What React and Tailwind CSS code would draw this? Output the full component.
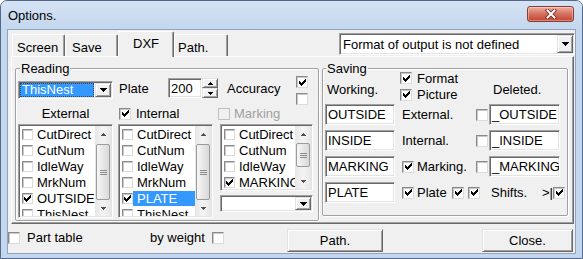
import React from "react";

const sunken =
  "border border-t-[#a0a0a0] border-l-[#a0a0a0] border-b-white border-r-white p-[1px] shadow-[inset_1px_1px_0_#696969,inset_-1px_-1px_0_#e3e3e3]";
const raised =
  "bg-[#f0f0f0] border border-t-[#e3e3e3] border-l-[#e3e3e3] border-b-[#696969] border-r-[#696969] shadow-[inset_1px_1px_0_#ffffff,inset_-1px_-1px_0_#a0a0a0]";

const Check = () => (
  <svg width="7" height="7" viewBox="0 0 7 7" shapeRendering="crispEdges">
    {[2, 3, 4, 3, 2, 1, 0].map((y, x) => (
      <rect key={x} x={x} y={y} width="1" height="3" fill="#000" />
    ))}
  </svg>
);

function Box({ on, disabled, small, className = "" }) {
  const size = small ? "w-[11px] h-[11px]" : "w-[12px] h-[12px]";
  const look = disabled
    ? "bg-[#f0f0f0] border-[#c0c0c0]"
    : "bg-white border-t-[#8a8a8a] border-l-[#8a8a8a] border-r-[#dcdcdc] border-b-[#dcdcdc] shadow-[inset_1px_1px_0_#c8c8c8]";
  return (
    <span className={`flex items-center justify-center shrink-0 border ${size} ${look} ${className}`}>
      {on && <Check />}
    </span>
  );
}

const Tri = ({ up, small, color = "#000" }) =>
  small ? (
    <svg width="5" height="3" viewBox="0 0 5 3" shapeRendering="crispEdges">
      <path d={up ? "M0 3 L2.5 0 L5 3Z" : "M0 0 L5 0 L2.5 3Z"} fill={color} />
    </svg>
  ) : (
    <svg width="7" height="4" viewBox="0 0 7 4" shapeRendering="crispEdges">
      <path d={up ? "M0 4 L3.5 0 L7 4Z" : "M0 0 L7 0 L3.5 4Z"} fill={color} />
    </svg>
  );

function DropBtn() {
  return (
    <div className={`${raised} w-[16px] shrink-0 flex items-center justify-center`}>
      <Tri />
    </div>
  );
}

function ScrollBar({ thumb }) {
  return (
    <div className="w-[16px] shrink-0 flex flex-col bg-gradient-to-r from-[#e6e6e6] via-[#f4f4f4] to-[#e6e6e6]">
      <div className="h-[16px] shrink-0 flex items-center justify-center">
        <Tri up small color="#505050" />
      </div>
      <div className="flex-1">
        <div
          className={`mx-[1px] rounded-[2px] border border-[#9b9b9b] bg-gradient-to-r from-[#f6f6f6] to-[#d9d9d9] flex flex-col items-center justify-center gap-[1px] ${thumb}`}
        >
          <span className="w-[7px] h-[1px] bg-[#8c8c8c]" />
          <span className="w-[7px] h-[1px] bg-[#8c8c8c]" />
          <span className="w-[7px] h-[1px] bg-[#8c8c8c]" />
        </div>
      </div>
      <div className="h-[16px] shrink-0 flex items-center justify-center">
        <Tri small color="#505050" />
      </div>
    </div>
  );
}

function ListBox({ items, thumb, className }) {
  return (
    <div className={`${sunken} bg-white flex ${className}`}>
      <div className="flex-1 min-w-0 overflow-hidden">
        {items.map((it) => (
          <div key={it.t} className="h-[16px] flex items-center pl-[2px] whitespace-nowrap">
            <Box on={it.on} small />
            <span
              className={`flex-1 h-[15px] pl-[4px] leading-[15px] ${it.sel ? "bg-[#3399ff] text-white" : ""}`}
            >
              {it.t}
            </span>
          </div>
        ))}
      </div>
      <ScrollBar thumb={thumb} />
    </div>
  );
}

function Edit({ text, className }) {
  return (
    <div className={`${sunken} bg-white pl-[2px] flex items-center whitespace-nowrap overflow-hidden shrink-0 ${className}`}>
      {text}
    </div>
  );
}

const base = ["CutDirect", "CutNum", "IdleWay", "MrkNum"];
const list1 = [...base.map((t) => ({ t })), { t: "OUTSIDE", on: true }, { t: "ThisNest" }];
const list2 = [...base.map((t) => ({ t })), { t: "PLATE", on: true, sel: true }, { t: "ThisNest" }];
const list3 = [{ t: "CutDirect" }, { t: "CutNum" }, { t: "IdleWay" }, { t: "MARKING", on: true }];

function Reading() {
  return (
    <div className="relative ml-[3px] mt-[11px] w-[304px] h-[153px] shrink-0 border border-[#a0a0a0] rounded-[2px] shadow-[inset_1px_1px_0_#ffffff,1px_1px_0_#ffffff]">
      <span className="absolute -top-[8px] left-[4px] px-[1px] bg-[#f0f0f0]">Reading</span>

      <div className="mt-[6px] h-[30px] flex items-start">
        <div className={`ml-[2px] mt-[6px] w-[95px] h-[18px] ${sunken} bg-white flex`}>
          <div className="flex-1 mr-[1px] bg-[#3399ff] text-white border border-dotted border-[#2b4a6f] pl-[1px] flex items-center leading-[12px]">
            ThisNest
          </div>
          <DropBtn />
        </div>
        <span className="ml-[6px] mt-[6px] w-[49px]">Plate</span>
        <Edit text="200" className="mt-[3px] w-[34px] h-[20px]" />
        <div className="mt-[3px] w-[16px] h-[20px] flex flex-col">
          <div className={`${raised} h-[10px] flex items-center justify-center`}>
            <Tri up small />
          </div>
          <div className={`${raised} h-[10px] flex items-center justify-center`}>
            <Tri small />
          </div>
        </div>
        <span className="ml-[9px] mt-[6px] w-[69px]">Accuracy</span>
        <div className="mt-[1px] flex flex-col gap-[5px]">
          <Box on />
          <Box />
        </div>
      </div>

      <div className="mt-[1px] h-[15px] flex items-center">
        <span className="ml-[2px] w-[95px] text-center">External</span>
        <Box on className="ml-[6px]" />
        <span className="ml-[5px] w-[82px]">Internal</span>
        <Box disabled />
        <span className="ml-[4px] text-[#a0a0a0]">Marking</span>
      </div>

      <div className="mt-[3px] flex items-start">
        <ListBox items={list1} thumb="mt-[2px] h-[56px]" className="ml-[2px] w-[95px] h-[94px]" />
        <ListBox items={list2} thumb="mt-[2px] h-[56px]" className="ml-[5px] w-[95px] h-[94px]" />
        <div className="ml-[7px] w-[93px] flex flex-col">
          <ListBox items={list3} thumb="mt-[1px] h-[24px]" className="w-[93px] h-[67px]" />
          <div className={`mt-[4px] h-[17px] ${sunken} bg-white flex`}>
            <div className="flex-1" />
            <DropBtn />
          </div>
        </div>
      </div>
    </div>
  );
}

function EditRow({ left, right, children, className = "" }) {
  return (
    <div className={`h-[21px] flex items-center ${className}`}>
      <Edit text={left} className="ml-[2px] w-[70px] h-[21px]" />
      {children}
      {right && <Edit text={right} className="w-[71px] h-[21px]" />}
    </div>
  );
}

function Saving() {
  return (
    <div className="relative ml-[3px] mt-[11px] w-[246px] h-[148px] shrink-0 border border-[#a0a0a0] rounded-[2px] shadow-[inset_1px_1px_0_#ffffff,1px_1px_0_#ffffff]">
      <span className="absolute -top-[8px] left-[3px] px-[1px] bg-[#f0f0f0]">Saving</span>

      <div className="h-[35px] flex items-start">
        <span className="ml-[4px] mt-[13px] w-[73px]">Working.</span>
        <div className="mt-[1px] w-[93px] flex flex-col">
          <div className="h-[16px] flex items-center">
            <Box on />
            <span className="ml-[5px]">Format</span>
          </div>
          <div className="h-[17px] flex items-center">
            <Box on />
            <span className="ml-[5px]">Picture</span>
          </div>
        </div>
        <span className="mt-[13px]">Deleted.</span>
      </div>

      <EditRow left="OUTSIDE" right="_OUTSIDE">
        <div className="w-[94px] flex items-center">
          <span className="ml-[7px]">External.</span>
          <Box className="ml-auto mr-[1px]" />
        </div>
      </EditRow>
      <EditRow left="INSIDE" right="_INSIDE" className="mt-[5px]">
        <div className="w-[94px] flex items-center">
          <span className="ml-[7px]">Internal.</span>
          <Box className="ml-auto mr-[1px]" />
        </div>
      </EditRow>
      <EditRow left="MARKING" right="_MARKING" className="mt-[5px]">
        <div className="w-[94px] flex items-center">
          <Box on className="ml-[7px]" />
          <span className="ml-[3px]">Marking.</span>
          <Box className="ml-auto mr-[1px]" />
        </div>
      </EditRow>
      <EditRow left="PLATE" className="mt-[5px]">
        <Box on className="ml-[7px]" />
        <span className="ml-[3px] w-[33px]">Plate</span>
        <Box on className="ml-[2px]" />
        <Box on className="ml-[4px]" />
        <span className="ml-[11px] w-[51px]">Shifts.</span>
        <span className="w-[11px]">&gt;|</span>
        <Box on />
      </EditRow>
    </div>
  );
}

function Tab({ label, className }) {
  return (
    <div
      className={`shrink-0 rounded-t-[2px] border-t border-l border-r border-t-white border-l-white border-r-[#696969] shadow-[inset_-1px_0_0_#a0a0a0] bg-[#f0f0f0] ${className}`}
    >
      {label}
    </div>
  );
}

export default function App() {
  return (
    <div className="w-[583px] h-[259px] flex flex-col bg-[#c4d7ee] border border-[#52698a] rounded-t-[7px] overflow-hidden font-['Liberation_Sans',Arial,sans-serif] text-[13px] leading-[15px] text-black select-none">
      <div className="h-[28px] shrink-0 flex items-start bg-gradient-to-b from-[#d5e3f4] to-[#c4d7ee]">
        <span className="ml-[7px] mt-[7px]">Options.</span>
        <div className="ml-auto mr-[8px] mt-[5px] w-[47px] h-[16px] rounded-[3px] border border-[#8a3a2f] bg-gradient-to-b from-[#eab0a4] via-[#d4705f] to-[#c24431] shadow-[inset_0_0_0_1px_rgba(255,255,255,0.35)] flex items-center justify-center">
          <svg width="12" height="10" viewBox="0 0 12 10">
            <path d="M2.5 1.5 L9.5 8.5 M9.5 1.5 L2.5 8.5" stroke="#6b2219" strokeWidth="3.6" strokeLinecap="square" />
            <path d="M2.5 1.5 L9.5 8.5 M9.5 1.5 L2.5 8.5" stroke="#ffffff" strokeWidth="2" strokeLinecap="square" />
          </svg>
        </div>
      </div>

      <div className="mx-[6px] h-[225px] shrink-0 flex flex-col bg-[#f0f0f0] border border-[#8ea4c0]">
        <div className="h-[26px] shrink-0 flex items-end pl-[4px]">
          <Tab label="Screen" className="w-[53px] h-[22px] pt-[5px] pl-[4px]" />
          <Tab label="Save" className="w-[53px] h-[22px] pt-[5px] pl-[6px]" />
          <Tab label="DXF" className="relative z-10 -mb-[1px] w-[56px] h-[26px] pt-[4px] text-center" />
          <Tab label="Path." className="w-[54px] h-[22px] pt-[5px] pl-[3px]" />
          <div className={`ml-auto self-start mt-[3px] w-[236px] h-[22px] ${sunken} bg-white flex`}>
            <div className="flex-1 pl-[2px] flex items-center whitespace-nowrap">
              Format of output is not defined
            </div>
            <DropBtn />
          </div>
        </div>

        <div className="ml-[3px] w-[563px] h-[168px] shrink-0 flex items-start border border-t-white border-l-white border-r-[#696969] border-b-[#696969] shadow-[inset_-1px_-1px_0_#a0a0a0]">
          <Reading />
          <Saving />
        </div>

        <div className="h-[29px] shrink-0 flex items-start">
          <Box className="mt-[8px]" />
          <span className="ml-[7px] mt-[6px] w-[123px]">Part table</span>
          <span className="mt-[6px] w-[62px]">by weight</span>
          <Box className="mt-[8px]" />
          <div className={`${raised} ml-[63px] mt-[5px] w-[96px] h-[23px] flex items-center justify-center`}>
            Path.
          </div>
          <div className={`${raised} ml-[99px] mt-[5px] w-[91px] h-[23px] flex items-center justify-center`}>
            Close.
          </div>
        </div>
      </div>
    </div>
  );
}
